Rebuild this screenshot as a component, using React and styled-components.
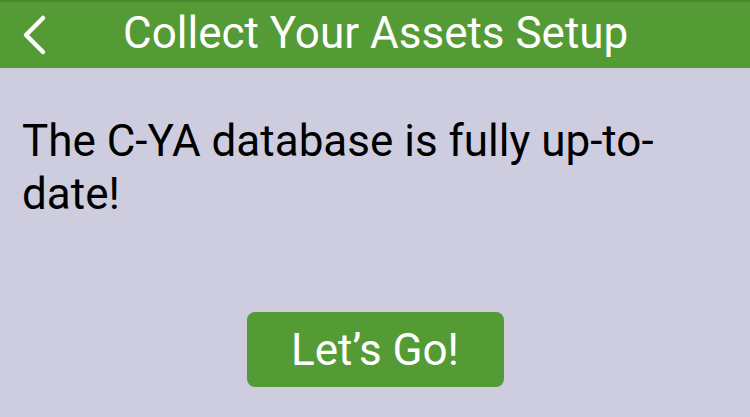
import React from 'react'
import styled, { createGlobalStyle } from 'styled-components'

const GlobalStyle = createGlobalStyle`
  html, body {
    margin: 0;
    padding: 0;
    background: #cdcddf;
    font-family: Roboto, "Liberation Sans", sans-serif;
  }
`

const Screen = styled.div`
  width: 750px;
  height: 417px;
  display: flex;
  flex-direction: column;
  background: #cdcddf;
  overflow: hidden;
`

const Header = styled.header`
  height: 68px;
  box-sizing: border-box;
  border-top: 2px solid #478a2c;
  padding-bottom: 4px;
  background: #549b35;
  display: flex;
  align-items: center;
`

const BackButton = styled.button`
  width: 70px;
  height: 62px;
  border: none;
  background: transparent;
  padding: 0 0 0 21px;
  display: flex;
  align-items: center;
  cursor: pointer;
`

const Title = styled.h1`
  margin: 0;
  flex: 1;
  padding-left: 53px;
  color: #fff;
  font-size: 44px;
  font-weight: 400;
  white-space: nowrap;
`

const Body = styled.main`
  flex: 1;
  display: flex;
  flex-direction: column;
  padding: 47px 22px 30px;
`

const Message = styled.p`
  margin: 0;
  color: #000;
  font-size: 44px;
  line-height: 53px;
  max-width: 660px;
`

const Actions = styled.div`
  margin-top: auto;
  display: flex;
  justify-content: center;
`

const GoButton = styled.button`
  width: 257px;
  height: 75px;
  border: none;
  border-radius: 8px;
  background: #549b35;
  color: #fff;
  font-family: Roboto, "Liberation Sans", sans-serif;
  font-size: 44px;
  cursor: pointer;
`

export default function App() {
  return (
    <Screen>
      <GlobalStyle />
      <Header>
        <BackButton aria-label='Back'>
          <svg width='27' height='42' viewBox='0 0 27 42' style={{ marginTop: 4 }}>
            <path
              d='M22 4 L5 21 L22 38'
              fill='none'
              stroke='#fff'
              strokeWidth='4.5'
              strokeLinecap='round'
              strokeLinejoin='round'
            />
          </svg>
        </BackButton>
        <Title>Collect Your Assets Setup</Title>
      </Header>
      <Body>
        <Message>The C-YA database is fully up-to-date!</Message>
        <Actions>
          <GoButton>Let’s Go!</GoButton>
        </Actions>
      </Body>
    </Screen>
  )
}
